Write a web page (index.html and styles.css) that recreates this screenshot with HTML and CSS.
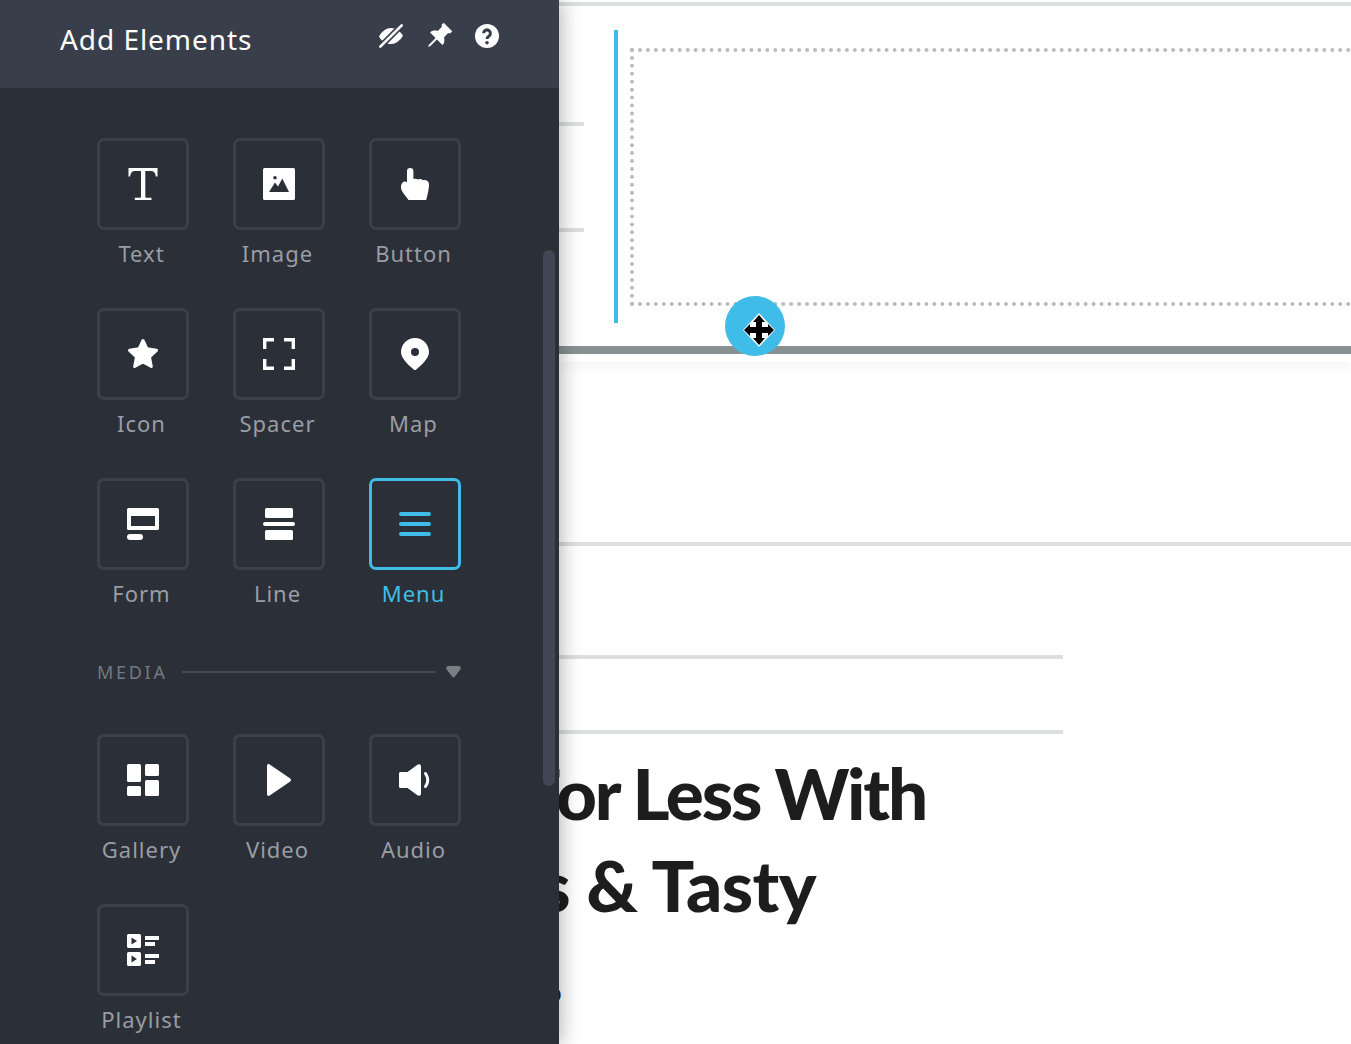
FILE: index.html
```html
<!DOCTYPE html>
<html lang="en">
<head>
<meta charset="utf-8">
<title>Add Elements</title>
<link rel="stylesheet" href="styles.css">
</head>
<body>
<div class="app">
  <aside class="panel">
    <header class="panel-head">
      <h2 class="panel-title">Add Elements</h2>
      <div class="head-icons">
        <svg class="head-icon" viewBox="0 0 24 24"><path class="w" d="M0 12.500C3 7 7.500 4 12 4s9 3 12 7.500C21 17 16.500 20 12 20S3 18 0 12.500z"/><path class="cut" d="M1 23 23 1" stroke-width="6"/><path class="ws" d="M1.300 22.700 22.700 1.300" stroke-width="2.600"/></svg>
        <svg class="head-icon" viewBox="0 0 24 24"><path class="w" transform="translate(12 12) rotate(45) scale(1.100) translate(-12 -12)" d="M6.500 .5H17.500V3L16 4.500V9.500C18.500 11 20 13 20 15.500H12.900V24L12 26 11.100 24V15.500H4C4 13 5.500 11 8 9.500V4.500L6.500 3Z"/></svg>
        <svg class="head-icon" viewBox="0 0 24 24"><circle class="w" cx="12" cy="12" r="12"/><path class="cut" d="M8.600 9.300a3.400 3.400 0 1 1 5.200 2.900c-1.300.8-1.800 1.400-1.800 2.900" stroke-width="3"/><circle class="dark" cx="12" cy="18.800" r="1.800"/></svg>
      </div>
    </header>
    <div class="panel-body">
      <div class="grid">
        <div class="item"><div class="tile"><svg class="ico" viewBox="0 0 32 32"><path class="w" d="M1.500 0H30.500V8.500H28.800C28.500 4.800 27 3 23.500 3H18.300V28.800C18.300 29.500 18.800 29.800 19.500 29.800H24.500V32H7.800V29.800H12.800C13.500 29.800 14 29.500 14 28.800V3H8.500C5 3 3.500 4.800 3.200 8.500H1.500Z"/></svg></div><span class="label">Text</span></div>
        <div class="item"><div class="tile"><svg class="ico" viewBox="0 0 32 32"><path class="w" fill-rule="evenodd" d="M1.500 0H30.500A1.500 1.500 0 0 1 32 1.500V30.500A1.500 1.500 0 0 1 30.500 32H1.500A1.500 1.500 0 0 1 0 30.500V1.500A1.500 1.500 0 0 1 1.500 0ZM12 8A1.800 1.800 0 1 0 12 11.600 1.800 1.800 0 1 0 12 8ZM6 24H26L19.300 10.500 15 18.500 12 14.500Z"/></svg></div><span class="label">Image</span></div>
        <div class="item"><div class="tile"><svg class="ico" viewBox="0 0 32 32"><path class="w" d="M8 3.200a3.200 3.200 0 0 1 6.400 0V11c2-.6 3.500-.3 4.500.5 1.600-.9 3.800-.6 4.800.7 2-.8 6.300.2 6.300 4 0 4-.9 8.500-2.800 15.800H9.500C7 28 2.500 24 2 20c-.3-3 1-5.500 2.500-6.300 1.200-.6 2.500-.3 3.500.5Z"/></svg></div><span class="label">Button</span></div>

        <div class="item"><div class="tile"><svg class="ico" viewBox="0 0 32 32"><polygon class="w wj" points="16,2.500 20,10.800 29.500,12.300 22.500,19 24.300,28.500 16,24 7.700,28.500 9.500,19 2.500,12.300 12,10.800"/></svg></div><span class="label">Icon</span></div>
        <div class="item"><div class="tile"><svg class="ico" viewBox="0 0 32 32"><path class="ws sq" stroke-width="3.400" d="M1.700 11V1.700H11M21 1.700H30.300V11M1.700 21V30.300H11M21 30.300H30.300V21"/></svg></div><span class="label">Spacer</span></div>
        <div class="item"><div class="tile"><svg class="ico" viewBox="0 0 32 32"><path class="w" fill-rule="evenodd" d="M16 0C8.300 0 2 6.300 2 14c0 6.500 8 13.500 12.700 17.500a2 2 0 0 0 2.600 0C22 27.500 30 20.500 30 14 30 6.300 23.700 0 16 0ZM16 10a4 4 0 1 0 0 8 4 4 0 1 0 0-8Z"/></svg></div><span class="label">Map</span></div>

        <div class="item"><div class="tile"><svg class="ico" viewBox="0 0 32 32"><path class="w" fill-rule="evenodd" d="M1.500 0H30.500A1.500 1.500 0 0 1 32 1.500V20.500A1.500 1.500 0 0 1 30.500 22H1.500A1.500 1.500 0 0 1 0 20.500V1.500A1.500 1.500 0 0 1 1.500 0ZM4 8V18H28V8Z"/><rect class="w" x="0" y="26" width="16" height="6" rx="3"/></svg></div><span class="label">Form</span></div>
        <div class="item"><div class="tile"><svg class="ico" viewBox="0 0 32 32"><rect class="w" x="2" y="0" width="28" height="10" rx="1.500"/><rect class="w" x="0" y="14" width="32" height="4" rx="2"/><rect class="w" x="2" y="22" width="28" height="10" rx="1.500"/></svg></div><span class="label">Line</span></div>
        <div class="item active"><div class="tile"><svg class="ico" viewBox="0 0 32 32"><rect class="b" x="0" y="4" width="32" height="4" rx="2"/><rect class="b" x="0" y="14" width="32" height="4" rx="2"/><rect class="b" x="0" y="24" width="32" height="4" rx="2"/></svg></div><span class="label">Menu</span></div>
      </div>

      <div class="divider">
        <span class="divider-name">MEDIA</span>
        <span class="divider-line"></span>
        <svg class="caret" viewBox="0 0 15 12"><path d="M2.500 0H12.500C14.500 0 15.500 2 14.300 3.500L8.800 10.800C8.100 11.800 6.900 11.800 6.200 10.800L.7 3.500C-.5 2 .5 0 2.500 0Z"/></svg>
      </div>

      <div class="grid">
        <div class="item"><div class="tile"><svg class="ico" viewBox="0 0 32 32"><rect class="w" x="0" y="0" width="14" height="18" rx="1.500"/><rect class="w" x="18" y="0" width="14" height="12" rx="1.500"/><rect class="w" x="0" y="22" width="14" height="10" rx="1.500"/><rect class="w" x="18" y="16" width="14" height="16" rx="1.500"/></svg></div><span class="label">Gallery</span></div>
        <div class="item"><div class="tile"><svg class="ico" viewBox="0 0 32 32"><path class="w" d="M4 1.800C4 .3 5.500-.4 6.700.5L27.200 14.500C28.300 15.300 28.300 16.700 27.200 17.500L6.700 31.500C5.500 32.400 4 31.700 4 30.200Z"/></svg></div><span class="label">Video</span></div>
        <div class="item"><div class="tile"><svg class="ico" viewBox="0 0 32 32"><path class="w" d="M0 9.500C0 8.700.7 8 1.500 8H8.500L18.800.6C20.200-.4 22 .5 22 2.200V29.800C22 31.500 20.200 32.400 18.800 31.400L8.500 24H1.500C.7 24 0 23.300 0 22.500Z"/><path class="ws" stroke-width="3" d="M26.500 9.500C29.300 13.500 29.300 18.500 26.500 22.500"/></svg></div><span class="label">Audio</span></div>

        <div class="item"><div class="tile"><svg class="ico" viewBox="0 0 32 32"><path class="w" fill-rule="evenodd" d="M1.500 0H12.500A1.500 1.500 0 0 1 14 1.500V12.500A1.500 1.500 0 0 1 12.500 14H1.500A1.500 1.500 0 0 1 0 12.500V1.500A1.500 1.500 0 0 1 1.500 0ZM4.500 3.500V10.500L10 7Z"/><path class="w" fill-rule="evenodd" d="M1.500 18H12.500A1.500 1.500 0 0 1 14 19.500V30.500A1.500 1.500 0 0 1 12.500 32H1.500A1.500 1.500 0 0 1 0 30.500V19.500A1.500 1.500 0 0 1 1.500 18ZM4.500 21.500V28.500L10 25Z"/><rect class="w" x="18" y="2" width="14" height="4"/><rect class="w" x="18" y="8" width="10" height="4"/><rect class="w" x="18" y="20" width="14" height="4"/><rect class="w" x="18" y="26" width="10" height="4"/></svg></div><span class="label">Playlist</span></div>
      </div>
    </div>
    <div class="thumb"></div>
  </aside>

  <main class="canvas">
    <section class="editor">
      <div class="rule rule-top"></div>
      <div class="stage">
        <div class="gutter">
          <div class="rule gutter-a"></div>
          <div class="rule gutter-b"></div>
        </div>
        <div class="drop-line"></div>
        <div class="frame"></div>
      </div>
      <div class="editor-bar"></div>
      <div class="handle">
        <svg class="cursor" viewBox="0 0 32 34">
          <polygon class="w" points="16,0 32,17 16,34 0,17"/>
          <path class="k" d="M16 2 22 9H19V14H25V11L31 17 25 23V20H19V25H22L16 32 10 25H13V20H7V23L1 17 7 11V14H13V9H10Z"/>
        </svg>
      </div>
    </section>
    <div class="rule rule-full"></div>
    <div class="rule rule-short rule-c"></div>
    <div class="rule rule-short rule-d"></div>
    <h1 class="headline">
      <span class="head-line line-one">For Less With</span>
      <span class="head-line line-two">s &amp; Tasty</span>
    </h1>
    <p class="clip-text">o</p>
  </main>
</div>
</body>
</html>
```

FILE: styles.css
```css
* { box-sizing: border-box; }
html, body { margin: 0; height: 100%; }
body { overflow: hidden; background: #fff; font-family: "Noto Sans", "Lato", sans-serif; }
.app { display: flex; width: 1351px; height: 1044px; overflow: hidden; }

/* Panel */
.panel {
  position: relative;
  z-index: 2;
  flex: 0 0 559px;
  height: 1044px;
  background: #2b2f38;
  box-shadow: 3px 0 18px rgba(0, 0, 0, .28);
  overflow: visible;
}
.panel-head {
  display: flex;
  align-items: center;
  justify-content: space-between;
  height: 88px;
  padding: 0 60px 0 60px;
  background: #393f4a;
}
.panel-title {
  margin: 0 0 10px;
  font-size: 28px;
  font-weight: 400;
  line-height: 40px;
  letter-spacing: .95px;
  color: #fff;
}
.head-icons { display: flex; gap: 24px; margin-top: -16px; }
.head-icon { display: block; width: 24px; height: 24px; overflow: visible; }
.w { fill: #fff; }
.b { fill: #3fbde8; }
.k { fill: #000; }
.dark { fill: #393f4a; }
.wj { stroke: #fff; stroke-width: 3; stroke-linejoin: round; }
.ws { fill: none; stroke: #fff; stroke-linecap: round; }
.sq { stroke-linecap: butt; }
.cut { fill: none; stroke: #393f4a; stroke-linecap: butt; }

.panel-body { padding: 50px 0 0 97px; }
.grid {
  display: grid;
  grid-template-columns: repeat(3, 92px);
  column-gap: 44px;
  grid-auto-rows: 170px;
}
.item { display: flex; flex-direction: column; align-items: center; }
.tile {
  display: flex;
  align-items: center;
  justify-content: center;
  width: 92px;
  height: 92px;
  border: 3px solid #3b404c;
  border-radius: 7px;
}
.ico { display: block; width: 32px; height: 32px; overflow: visible; }
.label {
  margin-top: 7px;
  padding-right: 3px;
  font-size: 22px;
  line-height: 32px;
  letter-spacing: 1px;
  color: #9a9da3;
}
.active .tile { border-color: #3fbde8; }
.active .label { color: #3fbde8; }

.divider {
  display: flex;
  align-items: center;
  width: 364px;
  height: 24px;
  margin: 12px 0 50px;
}
.divider-name {
  font-size: 18px;
  line-height: 24px;
  letter-spacing: 2.700px;
  color: #757981;
}
.divider-line {
  flex: 1;
  height: 2px;
  margin: 0 10px 0 14px;
  background: #444853;
}
.caret { display: block; width: 15px; height: 12px; fill: #7a7e85; }

.thumb {
  position: absolute;
  top: 250px;
  left: 543px;
  width: 12px;
  height: 536px;
  border-radius: 6px;
  background: #404653;
}

/* Canvas */
.canvas { position: relative; flex: 1; min-width: 0; overflow: hidden; background: #fff; }
.rule { height: 4px; background: #dcdfe0; }
.editor {
  position: relative;
  height: 362px;
  background: #fff;
  padding-top: 2px;
  box-shadow: 0 4px 14px rgba(0, 0, 0, .05);
}
.stage { display: flex; align-items: flex-start; height: 340px; }
.gutter { flex: 0 0 25px; }
.gutter-a { margin-top: 116px; }
.gutter-b { margin-top: 102px; }
.drop-line {
  flex: 0 0 4px;
  height: 293px;
  margin: 24px 0 0 30px;
  background: #3fbde8;
}
.frame {
  flex: 1;
  height: 258px;
  margin: 42px -24px 0 12px;
  border: 4px dotted #b9bcbd;
}
.editor-bar { height: 8px; background: #879191; }
.handle {
  position: absolute;
  top: 296px;
  left: 166px;
  width: 60px;
  height: 60px;
  border-radius: 50%;
  background: #3fbde8;
}
.cursor { position: absolute; top: 17px; left: 18px; width: 32px; height: 34px; }

.rule-full { margin-top: 180px; }
.rule-short { width: 504px; }
.rule-c { margin-top: 109px; }
.rule-d { margin-top: 71px; }

.headline {
  margin: 13px 0 0;
  font-family: "Lato", sans-serif;
  font-size: 71px;
  line-height: 92px;
  font-weight: 900;
  color: #1d1d1d;
}
.head-line { display: flex; justify-content: flex-end; white-space: nowrap; }
.line-one { width: 367px; letter-spacing: -2.200px; }
.line-two { width: 257px; letter-spacing: -.6px; }
.clip-text {
  display: flex;
  justify-content: flex-end;
  width: 3px;
  margin: 49px 0 0;
  font-size: 26px;
  line-height: 24px;
  color: #1d1d1d;
}
```
